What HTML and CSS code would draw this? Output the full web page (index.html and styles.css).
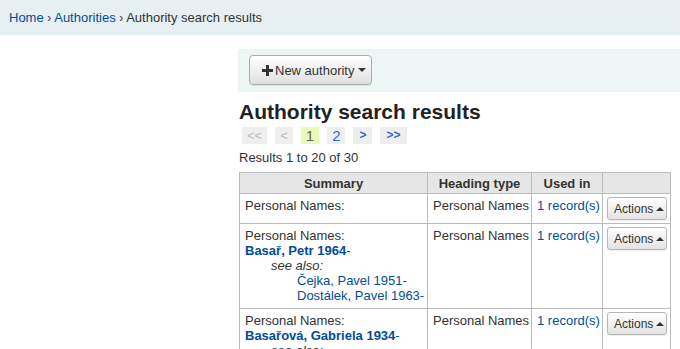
FILE: index.html
```html
<!DOCTYPE html>
<html lang="en">
<head>
    <meta charset="UTF-8">
    <title>Authority search results</title>
    <link rel="stylesheet" href="styles.css">
</head>
<body>
    <div class="breadcrumbs">
        <a href="#">Home</a> <span class="sep">&rsaquo;</span> <a href="#">Authorities</a> <span class="sep">&rsaquo;</span> Authority search results
    </div>

    <div class="main">
        <div class="sidebar"></div>
        <div class="content">
            <div class="toolbar">
                <button type="button" class="btn">
                    <svg class="plus" width="11" height="11" viewBox="0 0 11 11"><path d="M4 0h3v4h4v3H7v4H4V7H0V4h4z" fill="#333"/></svg>
                    New authority <span class="caret"></span>
                </button>
            </div>

            <h1>Authority search results</h1>

            <div class="pages">
                <span class="inactive">&lt;&lt;</span>
                <span class="inactive">&lt;</span>
                <span class="current">1</span>
                <a class="nav" href="#">2</a>
                <a class="nav arrow" href="#">&gt;</a>
                <a class="nav arrow" href="#">&gt;&gt;</a>
            </div>

            <p class="count">Results 1 to 20 of 30</p>

            <table>
                <colgroup>
                    <col class="col-summary">
                    <col class="col-type">
                    <col class="col-used">
                    <col class="col-actions">
                </colgroup>
                <thead>
                    <tr>
                        <th>Summary</th>
                        <th>Heading type</th>
                        <th>Used in</th>
                        <th></th>
                    </tr>
                </thead>
                <tbody>
                    <tr>
                        <td>Personal Names:</td>
                        <td>Personal Names</td>
                        <td><a href="#">1 record(s)</a></td>
                        <td><button type="button" class="btn-xs">Actions <span class="caret-up"></span></button></td>
                    </tr>
                    <tr>
                        <td>
                            <div>Personal Names:</div>
                            <div><a class="heading" href="#"><b>Basař, Petr 1964</b>-</a></div>
                            <div class="seealso">see also:</div>
                            <div class="seelink"><a href="#">Čejka, Pavel 1951-</a></div>
                            <div class="seelink"><a href="#">Dostálek, Pavel 1963-</a></div>
                        </td>
                        <td>Personal Names</td>
                        <td><a href="#">1 record(s)</a></td>
                        <td><button type="button" class="btn-xs">Actions <span class="caret-up"></span></button></td>
                    </tr>
                    <tr>
                        <td>
                            <div>Personal Names:</div>
                            <div><a class="heading" href="#"><b>Basařová, Gabriela 1934</b>-</a></div>
                            <div class="seealso">see also:</div>
                        </td>
                        <td>Personal Names</td>
                        <td><a href="#">1 record(s)</a></td>
                        <td><button type="button" class="btn-xs">Actions <span class="caret-up"></span></button></td>
                    </tr>
                </tbody>
            </table>
        </div>
    </div>
</body>
</html>
```

FILE: styles.css
```css
body {
    font-family: "Liberation Sans", Arial, sans-serif;
    font-size: 13px;
    line-height: 15px;
    color: #333;
    background-color: #fff;
    margin: 0;
}
a {
    color: #004d99;
    text-decoration: none;
}
.breadcrumbs {
    background-color: #e6f0f2;
    height: 35px;
    line-height: 35px;
    padding: 0 9px;
    font-size: 13px;
}
.breadcrumbs .sep {
    font-size: 12px;
}
.main {
    display: grid;
    grid-template-columns: 238px 1fr;
    padding-top: 14px;
}
.toolbar {
    background-color: #edf5f5;
    padding: 6px 11px;
    height: 31px;
    margin-bottom: 7px;
}
.btn {
    font-family: inherit;
    font-size: 13px;
    color: #333;
    height: 30px;
    width: 123px;
    padding: 0 10px 0 12px;
    border: 1px solid #adadad;
    border-radius: 4px;
    background: linear-gradient(#fff, #e0e0e0);
    box-shadow: 0 1px 1px rgba(0, 0, 0, 0.075);
    display: inline-flex;
    align-items: center;
    gap: 2px;
    white-space: nowrap;
    cursor: pointer;
}
.plus {
    flex-shrink: 0;
}
.caret {
    display: inline-block;
    width: 0;
    height: 0;
    border-left: 4px solid transparent;
    border-right: 4px solid transparent;
    border-top: 4px solid #333;
    margin-left: 2px;
}
h1 {
    font-size: 21px;
    line-height: 25px;
    font-weight: bold;
    margin: 0 0 3px 1px;
    color: #222;
}
.pages {
    display: flex;
    gap: 8px;
    margin-left: 4px;
    height: 17px;
}
.pages span, .pages a {
    display: block;
    line-height: 17px;
    padding: 0 5px;
    background-color: #eee;
    font-size: 13px;
}
.pages .inactive {
    color: #bbb;
}
.pages .current {
    background-color: #e6fcb7;
    color: #666;
    font-size: 15px;
}
.pages .nav {
    color: #3366dd;
    font-size: 15px;
}
.pages .arrow {
    font-size: 12px;
    font-weight: bold;
    padding: 0 6px;
}
.count {
    margin: 6px 0 7px 1px;
}
table {
    border-collapse: collapse;
    table-layout: fixed;
    width: 431px;
    margin-left: 1px;
}
.col-summary { width: 188px; }
.col-type { width: 104px; }
.col-used { width: 71px; }
.col-actions { width: 68px; }
th, td {
    border: 1px solid #bcbcbc;
    padding: 4px 5px 5px;
    vertical-align: top;
    text-align: left;
    white-space: nowrap;
    overflow: hidden;
}
th {
    background-color: #e6e6e6;
    text-align: center;
    font-weight: bold;
    padding: 3px 5px 2px;
}
td:nth-child(4) {
    padding: 3px 4px 3px;
}
.seealso {
    font-style: italic;
    padding-left: 26px;
}
.seelink {
    padding-left: 52px;
}
.btn-xs {
    font-family: inherit;
    font-size: 12px;
    color: #333;
    width: 60px;
    height: 23px;
    padding: 0 6px;
    border: 1px solid #b5b5b5;
    border-radius: 3px;
    background: linear-gradient(#fff, #e3e3e3);
    box-shadow: 0 1px 1px rgba(0, 0, 0, 0.075);
    display: flex;
    align-items: center;
    gap: 3px;
    cursor: pointer;
}
.caret-up {
    display: inline-block;
    width: 0;
    height: 0;
    border-left: 4px solid transparent;
    border-right: 4px solid transparent;
    border-bottom: 4px solid #333;
}
```
